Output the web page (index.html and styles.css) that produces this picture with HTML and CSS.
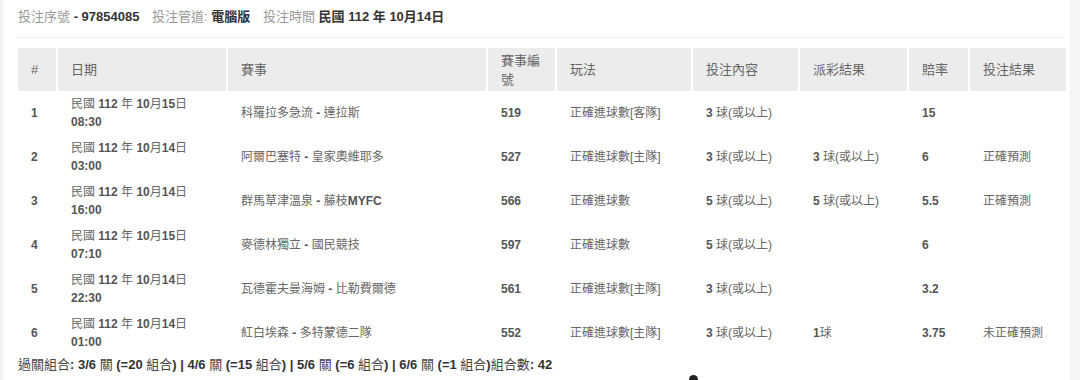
FILE: index.html
```html
<!DOCTYPE html>
<html lang="zh-Hant">
<head>
<meta charset="utf-8">
<title>投注紀錄</title>
<link rel="stylesheet" href="styles.css">
</head>
<body>
<div class="card">
  <div class="info">
    <span class="group"><span class="lbl">投注序號</span> <b class="val">- 97854085</b></span>
    <span class="group"><span class="lbl">投注管道:</span> <b class="val">電腦版</b></span>
    <span class="group"><span class="lbl">投注時間</span> <b class="val">民國 112 年 10月14日</b></span>
  </div>
  <div class="rule"></div>
  <table class="bets">
    <colgroup>
      <col class="c-no"><col class="c-date"><col class="c-match"><col class="c-code"><col class="c-type"><col class="c-bet"><col class="c-res"><col class="c-odds"><col class="c-out">
    </colgroup>
    <thead>
      <tr>
        <th>#</th><th>日期</th><th>賽事</th><th>賽事編號</th><th>玩法</th><th>投注內容</th><th>派彩結果</th><th>賠率</th><th>投注結果</th>
      </tr>
    </thead>
    <tbody>
      <tr>
        <td><b>1</b></td>
        <td>民國 <b>112</b> 年 <b>10</b>月<b>15</b>日<br><b>08:30</b></td>
        <td>科羅拉多急流 <b>-</b> 達拉斯</td>
        <td><b>519</b></td>
        <td>正確進球數[客隊]</td>
        <td><b>3</b> 球(或以上)</td>
        <td></td>
        <td><b>15</b></td>
        <td></td>
      </tr>
      <tr>
        <td><b>2</b></td>
        <td>民國 <b>112</b> 年 <b>10</b>月<b>14</b>日<br><b>03:00</b></td>
        <td>阿爾巴塞特 <b>-</b> 皇家奧維耶多</td>
        <td><b>527</b></td>
        <td>正確進球數[主隊]</td>
        <td><b>3</b> 球(或以上)</td>
        <td><b>3</b> 球(或以上)</td>
        <td><b>6</b></td>
        <td>正確預測</td>
      </tr>
      <tr>
        <td><b>3</b></td>
        <td>民國 <b>112</b> 年 <b>10</b>月<b>14</b>日<br><b>16:00</b></td>
        <td>群馬草津溫泉 <b>- </b>藤枝<b>MYFC</b></td>
        <td><b>566</b></td>
        <td>正確進球數</td>
        <td><b>5</b> 球(或以上)</td>
        <td><b>5</b> 球(或以上)</td>
        <td><b>5.5</b></td>
        <td>正確預測</td>
      </tr>
      <tr>
        <td><b>4</b></td>
        <td>民國 <b>112</b> 年 <b>10</b>月<b>15</b>日<br><b>07:10</b></td>
        <td>麥德林獨立 <b>-</b> 國民競技</td>
        <td><b>597</b></td>
        <td>正確進球數</td>
        <td><b>5</b> 球(或以上)</td>
        <td></td>
        <td><b>6</b></td>
        <td></td>
      </tr>
      <tr>
        <td><b>5</b></td>
        <td>民國 <b>112</b> 年 <b>10</b>月<b>14</b>日<br><b>22:30</b></td>
        <td>瓦德霍夫曼海姆 <b>-</b> 比勒費爾德</td>
        <td><b>561</b></td>
        <td>正確進球數[主隊]</td>
        <td><b>3</b> 球(或以上)</td>
        <td></td>
        <td><b>3.2</b></td>
        <td></td>
      </tr>
      <tr>
        <td><b>6</b></td>
        <td>民國 <b>112</b> 年 <b>10</b>月<b>14</b>日<br><b>01:00</b></td>
        <td>紅白埃森 <b>-</b> 多特蒙德二隊</td>
        <td><b>552</b></td>
        <td>正確進球數[主隊]</td>
        <td><b>3</b> 球(或以上)</td>
        <td><b>1</b>球</td>
        <td><b>3.75</b></td>
        <td>未正確預測</td>
      </tr>
    </tbody>
  </table>
  <div class="footer">過關組合<b>: 3/6 </b>關 <b>(=20 </b>組合<b>) | 4/6 </b>關 <b>(=15 </b>組合<b>) | 5/6 </b>關 <b>(=6 </b>組合<b>) | 6/6 </b>關 <b>(=1 </b>組合<b>)</b>組合數<b>: 42</b></div>
  <span class="dot"></span>
</div>
</body>
</html>
```
FILE: styles.css
```css
html, body {
  margin: 0;
  padding: 0;
}
body {
  background: #f5f5f5;
  font-family: "Liberation Sans", "Noto Sans CJK TC", sans-serif;
  color: #555;
  height: 380px;
  overflow: hidden;
}
.card {
  position: relative;
  width: 1052px;
  height: 380px;
  padding: 7px 0 0 18px;
  background: linear-gradient(to right, #eeeeee 0, #ffffff 6px);
  box-sizing: content-box;
}
.info {
  font-size: 13px;
  line-height: 20px;
  height: 20px;
  white-space: nowrap;
}
.group {
  margin-right: 9px;
}
.lbl {
  color: #9a9a9a;
}
.val {
  color: #333;
  font-weight: bold;
}
.rule {
  width: 1050px;
  margin: 10px 0 0 -1px;
  height: 1px;
  background: #f0f0f0;
}
.bets {
  margin-top: 10px;
  width: 1048px;
  table-layout: fixed;
  border-collapse: separate;
  border-spacing: 0;
  font-size: 12px;
}
.c-no { width: 40px; }
.c-date { width: 170px; }
.c-match { width: 260px; }
.c-code { width: 69px; }
.c-type { width: 136px; }
.c-bet { width: 107px; }
.c-res { width: 109px; }
.c-odds { width: 61px; }
.c-out { width: 96px; }
.bets th {
  background: #ececec;
  color: #666;
  font-weight: normal;
  font-size: 13px;
  line-height: 19px;
  height: 43px;
  padding: 2px 13px;
  box-sizing: border-box;
  text-align: left;
  vertical-align: middle;
  border-right: 2px solid #fff;
}
.bets th:last-child {
  border-right: 0;
}
.bets td {
  height: 44px;
  padding: 0 13px;
  box-sizing: border-box;
  line-height: 18px;
  color: #666;
  vertical-align: middle;
  text-align: left;
}
.bets td b {
  color: #555;
}
.footer {
  font-size: 13px;
  line-height: 20px;
  color: #444;
  white-space: nowrap;
}
.footer b {
  color: #333;
}
.dot {
  position: absolute;
  left: 689px;
  top: 375px;
  width: 9px;
  height: 9px;
  border-radius: 50%;
  background: #222;
}
```
